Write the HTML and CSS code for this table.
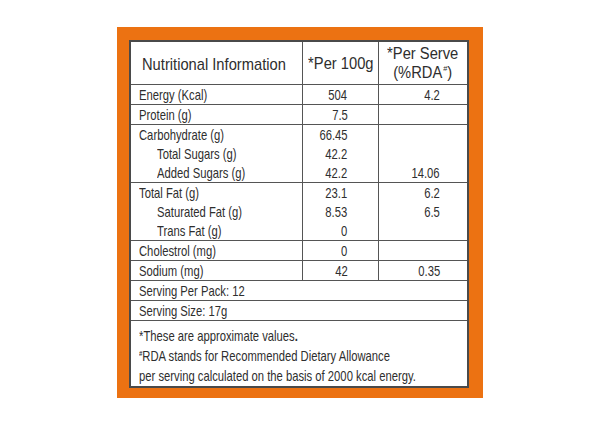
FILE: index.html
```html
<!DOCTYPE html>
<html>
<head>
<meta charset="utf-8">
<link rel="stylesheet" href="styles.css">
</head>
<body>
<div class="frame">
  <table class="facts">
    <colgroup>
      <col class="c1"><col class="c2"><col class="c3">
    </colgroup>
    <tr class="head">
      <td class="name"><span class="t">Nutritional Information</span></td>
      <td class="ctr"><span class="t">*Per 100g</span></td>
      <td class="ctr two"><span class="t">*Per Serve<br>(%RDA<sup class="mark">#</sup>)</span></td>
    </tr>
    <tr class="row"><td><span class="t">Energy (Kcal)</span></td><td class="num"><span class="t">504</span></td><td class="num n3"><span class="t">4.2</span></td></tr>
    <tr class="row"><td><span class="t">Protein (g)</span></td><td class="num"><span class="t">7.5</span></td><td class="num n3"></td></tr>
    <tr class="row"><td><span class="t">Carbohydrate (g)</span></td><td class="num"><span class="t">66.45</span></td><td class="num n3"></td></tr>
    <tr class="row cont"><td class="sub"><span class="t">Total Sugars (g)</span></td><td class="num"><span class="t">42.2</span></td><td class="num n3"></td></tr>
    <tr class="row cont"><td class="sub"><span class="t">Added Sugars (g)</span></td><td class="num"><span class="t">42.2</span></td><td class="num n3"><span class="t">14.06</span></td></tr>
    <tr class="row"><td><span class="t">Total Fat (g)</span></td><td class="num"><span class="t">23.1</span></td><td class="num n3"><span class="t">6.2</span></td></tr>
    <tr class="row cont"><td class="sub"><span class="t">Saturated Fat (g)</span></td><td class="num"><span class="t">8.53</span></td><td class="num n3"><span class="t">6.5</span></td></tr>
    <tr class="row cont"><td class="sub"><span class="t">Trans Fat (g)</span></td><td class="num"><span class="t">0</span></td><td class="num n3"></td></tr>
    <tr class="row"><td><span class="t">Cholestrol (mg)</span></td><td class="num"><span class="t">0</span></td><td class="num n3"></td></tr>
    <tr class="row"><td><span class="t">Sodium (mg)</span></td><td class="num"><span class="t">42</span></td><td class="num n3"><span class="t">0.35</span></td></tr>
    <tr class="row"><td colspan="3"><span class="t">Serving Per Pack: 12</span></td></tr>
    <tr class="row"><td colspan="3"><span class="t">Serving Size: 17g</span></td></tr>
    <tr class="notes">
      <td colspan="3">
        <div class="note"><span class="t">*These are approximate values<b>.</b></span></div>
        <div class="note"><span class="t"><sup class="mark2">#</sup>RDA stands for Recommended Dietary Allowance</span></div>
        <div class="note"><span class="t">per serving calculated on the basis of 2000 kcal energy.</span></div>
      </td>
    </tr>
  </table>
</div>
</body>
</html>
```

FILE: styles.css
```css
html, body {
  margin: 0;
  padding: 0;
  background: #ffffff;
}
body {
  height: 426px;
  box-sizing: border-box;
  padding-top: 27px;
  display: flex;
  align-items: flex-start;
  justify-content: center;
  font-family: "Liberation Sans", Arial, sans-serif;
  color: #2e2e2e;
}
.frame {
  background: #ec7212;
  padding: 13px 14px 10px 12px;
}
.facts {
  border-collapse: collapse;
  table-layout: fixed;
  width: 338px;
  background: #fff;
  border: 2px solid #4a4a4a;
}
.c1 { width: 172px; }
.c2 { width: 76px; }
.c3 { width: 90px; }
.facts td {
  border-left: 1px solid #555;
  border-right: 1px solid #555;
  border-top: 1px solid #555;
  padding: 0 0 0 8px;
  font-size: 15px;
  line-height: 19px;
  height: 19px;
  white-space: nowrap;
  vertical-align: middle;
  overflow: visible;
}
.t {
  display: inline-block;
  transform: scaleX(0.75);
  transform-origin: left center;
}
.facts td.num .t {
  transform-origin: right center;
}
.facts tr.cont td {
  border-top-style: hidden;
}
.facts tr.head td {
  height: 40px;
  font-size: 17px;
  line-height: 17px;
  padding: 0;
}
.facts tr.head td .t {
  transform: scaleX(0.865);
}
.facts tr.head td.two {
  font-size: 16px;
  line-height: 18.5px;
  padding-top: 1px;
}
.facts tr.head td.two .t {
  transform: scaleX(0.92);
}
.facts tr.head td.name {
  padding-left: 11px;
  padding-top: 2px;
}
.facts td.ctr {
  text-align: center;
}
.facts tr.head td.ctr .t {
  transform-origin: center center;
}
.facts td.num {
  text-align: right;
  padding: 0 30px 0 0;
}
.facts td.n3 {
  padding-right: 27px;
}
.facts td.sub {
  padding-left: 26px;
}
.mark {
  font-size: 8px;
  vertical-align: 7px;
  line-height: 0;
  margin-left: 1px;
}
.mark2 {
  font-size: 8px;
  vertical-align: 5px;
  line-height: 0;
  font-weight: bold;
}
.facts tr.notes td {
  height: auto;
  padding: 5px 0 0 8px;
}
.note {
  line-height: 20px;
  height: 20px;
}
```
